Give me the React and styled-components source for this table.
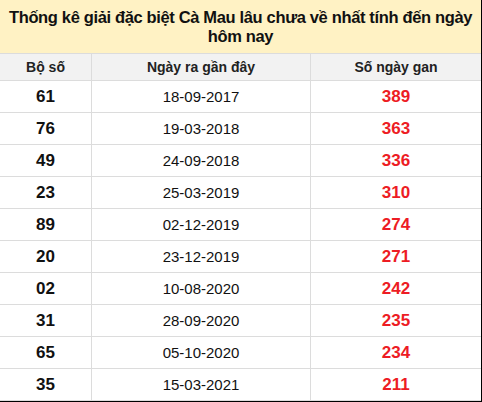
import React from "react";
import styled, { createGlobalStyle } from "styled-components";

const Global = createGlobalStyle`
  html, body { margin: 0; padding: 0; background: #fff; }
  body { font-family: "Liberation Sans", Arial, sans-serif; }
`;

const Board = styled.div`
  width: 482px;
  height: 402px;
  box-sizing: border-box;
  border-right: 1px solid #000;
  border-bottom: 1px solid #000;
  display: flex;
  flex-direction: column;
  background: #fff;
`;

const Title = styled.div`
  height: 54px;
  box-sizing: border-box;
  border-bottom: 1px solid #dcdcdc;
  background: #fff2c4;
  display: flex;
  align-items: center;
  justify-content: center;
  text-align: center;
  font-weight: bold;
  font-size: 16.5px;
  letter-spacing: -0.35px;
  line-height: 19px;
  color: #111;
  padding: 0;
`;

const Row = styled.div`
  display: grid;
  grid-template-columns: 92px 219px 1fr;
  height: ${(p) => (p.$head ? "27px" : "32px")};
  box-sizing: border-box;
  border-bottom: 1px solid #dcdcdc;
  background: ${(p) => (p.$head ? "#f2f2f2" : "#fff")};
`;

const Cell = styled.div`
  display: flex;
  align-items: center;
  justify-content: center;
  box-sizing: border-box;
  border-right: ${(p) => (p.$last ? "none" : "1px solid #dcdcdc")};
  font-size: ${(p) => (p.$kind === "head" ? "14px" : p.$kind === "date" ? "15px" : "17px")};
  font-weight: ${(p) => (p.$kind === "date" ? "normal" : "bold")};
  color: ${(p) => (p.$kind === "gan" ? "#ed1c24" : p.$kind === "head" ? "#222" : "#111")};
`;

const rows = [
  ["61", "18-09-2017", "389"],
  ["76", "19-03-2018", "363"],
  ["49", "24-09-2018", "336"],
  ["23", "25-03-2019", "310"],
  ["89", "02-12-2019", "274"],
  ["20", "23-12-2019", "271"],
  ["02", "10-08-2020", "242"],
  ["31", "28-09-2020", "235"],
  ["65", "05-10-2020", "234"],
  ["35", "15-03-2021", "211"],
];

export default function App() {
  return (
    <>
      <Global />
      <Board>
        <Title>Thống kê giải đặc biệt Cà Mau lâu chưa về nhất tính đến ngày hôm nay</Title>
        <Row $head>
          <Cell $kind="head">Bộ số</Cell>
          <Cell $kind="head">Ngày ra gần đây</Cell>
          <Cell $kind="head" $last>Số ngày gan</Cell>
        </Row>
        {rows.map(([n, d, g]) => (
          <Row key={n}>
            <Cell $kind="num">{n}</Cell>
            <Cell $kind="date">{d}</Cell>
            <Cell $kind="gan" $last>{g}</Cell>
          </Row>
        ))}
      </Board>
    </>
  );
}
